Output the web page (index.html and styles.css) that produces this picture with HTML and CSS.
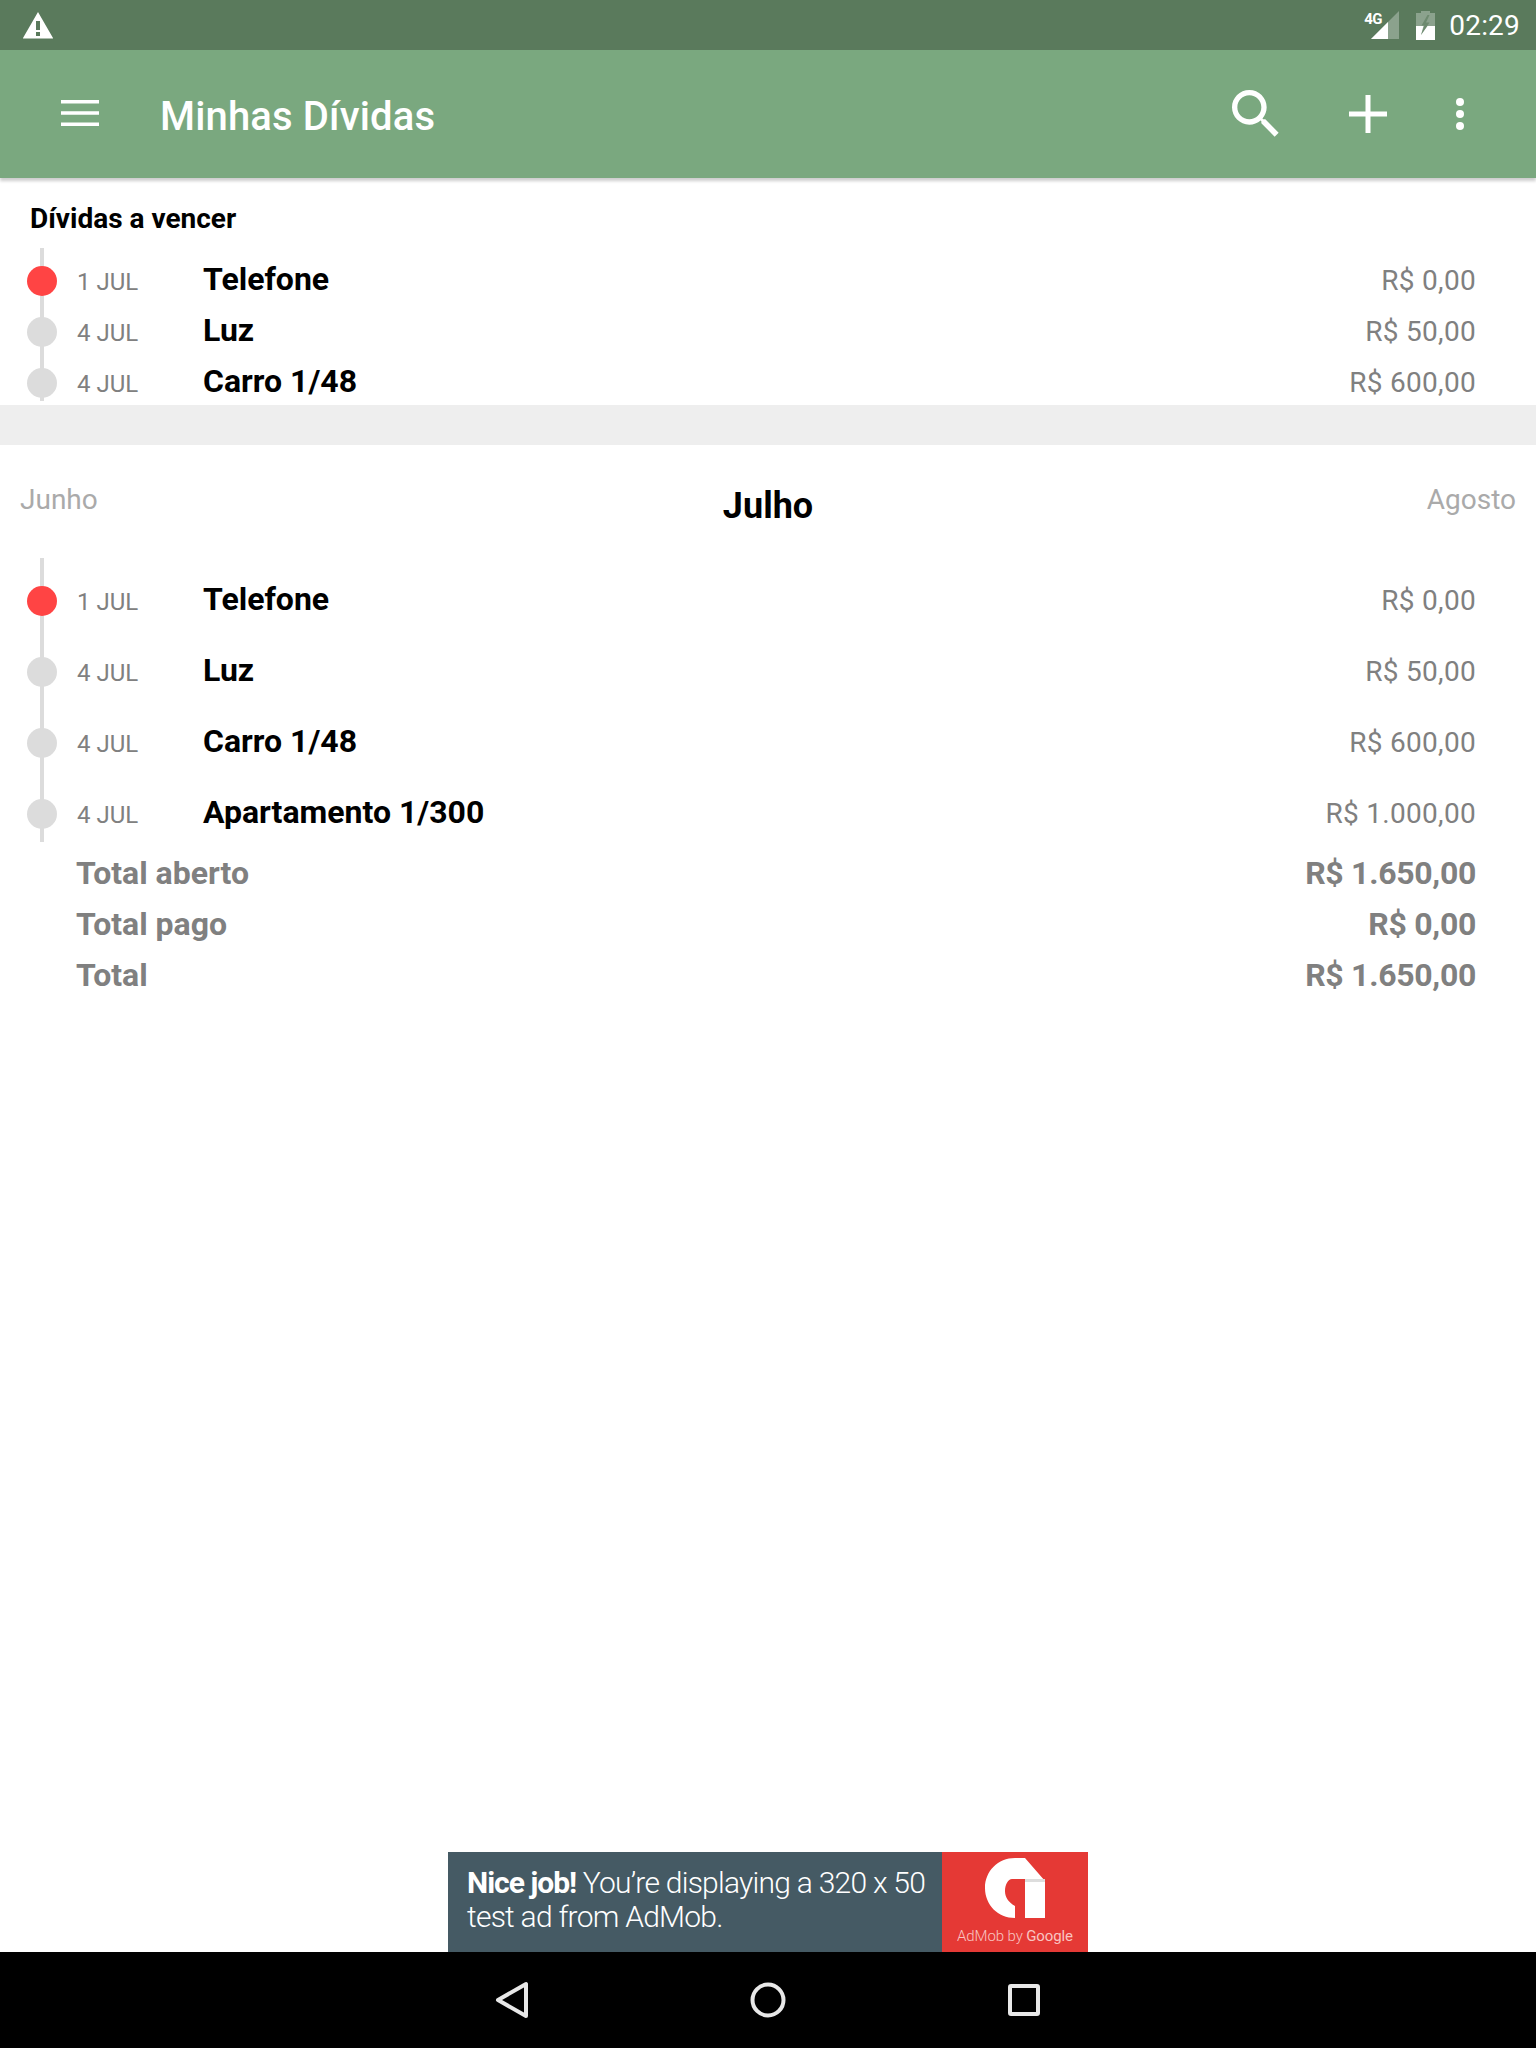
FILE: index.html
```html
<!DOCTYPE html>
<html lang="pt-BR">
<head>
  <meta charset="UTF-8" />
  <meta name="viewport" content="width=device-width, initial-scale=1.0" />
  <title>Minhas Dívidas</title>
  <link rel="stylesheet" href="styles.css">
</head>
<body>
  <div class="app">
    <!-- barra de status -->
    <div class="status-bar">
      <svg class="warn-icon" width="32" height="28" viewBox="0 0 32 28">
        <path fill="#fff" fill-rule="evenodd" d="M16 1 L31 27 a0.5 .5 0 0 1 -.5 .6 H1.5 a0.5 .5 0 0 1 -.5 -.6 Z M14 10 V19 H18 V10 Z M14 21 V25 H18 V21 Z"/>
      </svg>
      <div class="status-right">
        <div class="signal">
          <span class="net-label">4G</span>
          <svg width="28" height="28" viewBox="0 0 28 28">
            <path fill="#fff" fill-opacity=".3" d="M28 0 V28 H0 Z"/>
            <path fill="#fff" d="M17 11 V28 H0 Z"/>
          </svg>
        </div>
        <svg class="battery" width="19" height="29" viewBox="0 0 19 29">
          <path fill="#fff" fill-opacity=".3" d="M5 0 H14 V2 H19 V29 H0 V2 H5 Z"/>
          <path fill="#fff" d="M0 15 H7.500 L5 24 L11.500 15 H19 V29 H0 Z"/>
          <path fill="#5a7a5c" fill-opacity=".6" d="M11.500 4 L5.500 14.500 H8.500 L5 24 L13.500 11.500 H10 L13.500 4 Z"/>
        </svg>
        <span class="clock">02:29</span>
      </div>
    </div>

    <!-- toolbar -->
    <header class="toolbar">
      <svg class="menu-icon" width="38" height="26" viewBox="0 0 38 26">
        <path fill="#fff" d="M0 0 H38 V3.500 H0 Z M0 11.250 H38 V14.750 H0 Z M0 22.500 H38 V26 H0 Z"/>
      </svg>
      <h1 class="toolbar-title">Minhas Dívidas</h1>
      <svg class="search-icon" width="64" height="64" viewBox="0 0 24 24">
        <path fill="#fff" d="M15.500 14h-.79l-.28-.27C15.410 12.590 16 11.110 16 9.500 16 5.910 13.090 3 9.500 3S3 5.910 3 9.500 5.910 16 9.500 16c1.610 0 3.090-.59 4.230-1.570l.27.28v.79l5 4.990L20.490 19l-4.990-5zm-6 0C7.010 14 5 11.990 5 9.500S7.010 5 9.500 5 14 7.010 14 9.500 11.990 14 9.500 14z"/>
      </svg>
      <svg class="add-icon" width="38" height="38" viewBox="0 0 38 38">
        <path fill="#fff" d="M16.500 0 H21.500 V16.500 H38 V21.500 H21.500 V38 H16.500 V21.500 H0 V16.500 H16.500 Z"/>
      </svg>
      <svg class="more-icon" width="8" height="32" viewBox="0 0 8 32">
        <circle cx="4" cy="4" r="4" fill="#fff"/>
        <circle cx="4" cy="16" r="4" fill="#fff"/>
        <circle cx="4" cy="28" r="4" fill="#fff"/>
      </svg>
    </header>

    <main class="content">
      <!-- a vencer -->
      <section class="upcoming">
        <h2 class="section-title">Dívidas a vencer</h2>
        <ul class="timeline timeline-compact">
          <li class="debt-row">
            <span class="dot dot-late"></span>
            <span class="debt-date">1 JUL</span>
            <span class="debt-name">Telefone</span>
            <span class="debt-value">R$ 0,00</span>
          </li>
          <li class="debt-row">
            <span class="dot"></span>
            <span class="debt-date">4 JUL</span>
            <span class="debt-name">Luz</span>
            <span class="debt-value">R$ 50,00</span>
          </li>
          <li class="debt-row">
            <span class="dot"></span>
            <span class="debt-date">4 JUL</span>
            <span class="debt-name">Carro 1/48</span>
            <span class="debt-value">R$ 600,00</span>
          </li>
        </ul>
      </section>

      <div class="band"></div>

      <!-- mes -->
      <div class="month-nav">
        <span class="month-side">Junho</span>
        <span class="month-current">Julho</span>
        <span class="month-side month-next">Agosto</span>
      </div>

      <ul class="timeline timeline-month">
        <li class="debt-row">
          <span class="dot dot-late"></span>
          <span class="debt-date">1 JUL</span>
          <span class="debt-name">Telefone</span>
          <span class="debt-value">R$ 0,00</span>
        </li>
        <li class="debt-row">
          <span class="dot"></span>
          <span class="debt-date">4 JUL</span>
          <span class="debt-name">Luz</span>
          <span class="debt-value">R$ 50,00</span>
        </li>
        <li class="debt-row">
          <span class="dot"></span>
          <span class="debt-date">4 JUL</span>
          <span class="debt-name">Carro 1/48</span>
          <span class="debt-value">R$ 600,00</span>
        </li>
        <li class="debt-row">
          <span class="dot"></span>
          <span class="debt-date">4 JUL</span>
          <span class="debt-name">Apartamento 1/300</span>
          <span class="debt-value">R$ 1.000,00</span>
        </li>
      </ul>

      <div class="totals">
        <div class="total-row"><span>Total aberto</span><span class="total-value">R$ 1.650,00</span></div>
        <div class="total-row"><span>Total pago</span><span class="total-value">R$ 0,00</span></div>
        <div class="total-row"><span>Total</span><span class="total-value">R$ 1.650,00</span></div>
      </div>
    </main>

    <!-- anuncio -->
    <div class="ad-slot">
      <div class="ad">
        <p class="ad-text"><b>Nice job!</b> You’re displaying a 320 x 50<br>test ad from AdMob.</p>
        <div class="ad-brand">
          <svg width="60" height="60" viewBox="0 0 60 60">
            <path fill="#fff" d="M30 0 H40 L60 23 V60 H40 V21 H27 C23 21 20 27 20 33 C20 39 23 44 30 48 V60 C13 60 0 47 0 30 C0 13 13 0 30 0 Z"/>
            <path fill="#ddd" d="M40 21 H60 V24 H40 Z"/>
          </svg>
          <span class="ad-brand-text">AdMob by <b>Google</b></span>
        </div>
      </div>
    </div>

    <!-- navegacao -->
    <nav class="nav-bar">
      <span class="nav-btn">
        <svg width="36" height="38" viewBox="0 0 36 38">
          <path d="M32 3 V35 L4 19 Z" fill="none" stroke="#e8e8e8" stroke-width="4" stroke-linejoin="round"/>
        </svg>
      </span>
      <span class="nav-btn">
        <svg width="36" height="36" viewBox="0 0 36 36">
          <circle cx="18" cy="18" r="15.500" fill="none" stroke="#e8e8e8" stroke-width="4"/>
        </svg>
      </span>
      <span class="nav-btn">
        <svg width="32" height="32" viewBox="0 0 32 32">
          <rect x="2" y="2" width="28" height="28" rx="1" fill="none" stroke="#e8e8e8" stroke-width="4"/>
        </svg>
      </span>
    </nav>
  </div>
</body>
</html>
```

FILE: styles.css
```css
* {
  box-sizing: border-box;
}
body {
  margin: 0;
  font-family: Roboto, 'Noto Sans', sans-serif;
  background-color: #fff;
}
h1, h2, p, ul {
  margin: 0;
  padding: 0;
}
ul {
  list-style: none;
}
.app {
  display: flex;
  flex-direction: column;
  height: 2048px;
  overflow: hidden;
}

/* status */
.status-bar {
  display: flex;
  align-items: center;
  justify-content: space-between;
  height: 50px;
  padding: 0 16px 0 22px;
  background-color: #5a7a5c;
  color: #fff;
}
.warn-icon {
  margin-top: -1px;
}
.status-right {
  display: flex;
  align-items: center;
}
.signal {
  position: relative;
  width: 28px;
  height: 28px;
}
.net-label {
  position: absolute;
  left: -7px;
  top: -1px;
  font-size: 15px;
  font-weight: 700;
  letter-spacing: -0.6px;
}
.signal svg {
  display: block;
}
.battery {
  margin: 0 0 0 17px;
}
.clock {
  margin-left: 14px;
  font-size: 28px;
  letter-spacing: 0.2px;
}

/* toolbar */
.toolbar {
  position: relative;
  z-index: 1;
  display: flex;
  align-items: center;
  height: 128px;
  padding: 0 72px 0 61px;
  background-color: #7aa87f;
  box-shadow: 0 3px 3px rgba(0,0,0,0.2);
}
.menu-icon {
  margin-top: -2px;
}
.toolbar-title {
  flex: 1;
  margin: 5px 0 0 61px;
  font-size: 40px;
  font-weight: 500;
  letter-spacing: 0.15px;
  color: #fff;
}
.add-icon {
  margin-left: 61px;
}
.more-icon {
  margin-left: 69px;
}

/* listas */
.content {
  flex: 1;
}
.upcoming {
  height: 227px;
  overflow: hidden;
}
.section-title {
  padding: 22px 0 0 30px;
  font-size: 28px;
  font-weight: 700;
  line-height: 38px;
  color: #000;
}
.timeline {
  position: relative;
  padding-left: 27px;
}
.timeline::before {
  content: "";
  position: absolute;
  left: 40px;
  top: 0;
  bottom: 0;
  width: 4px;
  background-color: #dcdcdc;
}
.timeline-compact {
  height: 153px;
  margin-top: 10px;
  padding-top: 7px;
}
.timeline-compact .debt-row {
  height: 51px;
}
.timeline-month {
  height: 284px;
  padding-top: 7px;
}
.timeline-month .debt-row {
  height: 71px;
}
.debt-row {
  position: relative;
  display: flex;
  align-items: center;
  padding-right: 60px;
}
.dot {
  flex: none;
  width: 30px;
  height: 30px;
  border-radius: 50%;
  background-color: #dcdcdc;
}
.dot-late {
  background-color: #ff4444;
}
.debt-date {
  flex: none;
  width: 146px;
  margin-top: 2px;
  padding-left: 20px;
  font-size: 24px;
  color: #808080;
}
.debt-name {
  flex: 1;
  margin-top: -4px;
  font-size: 32px;
  font-weight: 700;
  color: #000;
}
.debt-value {
  font-size: 28px;
  letter-spacing: 0.3px;
  color: #808080;
}
.band {
  height: 40px;
  background-color: #eeeeee;
}
.month-nav {
  display: grid;
  grid-template-columns: 1fr auto 1fr;
  height: 113px;
  padding: 38px 20px 0;
}
.month-side {
  font-size: 28px;
  color: #aaa;
}
.month-next {
  text-align: right;
}
.month-current {
  margin-top: 2px;
  font-size: 36px;
  font-weight: 700;
  color: #000;
}
.totals {
  padding: 6px 60px 0 76px;
}
.total-row {
  display: flex;
  justify-content: space-between;
  height: 51px;
  font-size: 32px;
  font-weight: 700;
  line-height: 51px;
  color: #808080;
}
.total-value {
  letter-spacing: -0.3px;
}

/* anuncio */
.ad-slot {
  display: flex;
  justify-content: center;
}
.ad {
  display: flex;
  width: 640px;
  height: 100px;
  background-color: #455a64;
}
.ad-text {
  width: 494px;
  padding: 14px 0 0 19px;
  font-size: 30px;
  font-weight: 300;
  line-height: 34px;
  letter-spacing: -0.75px;
  color: #fff;
  white-space: nowrap;
}
.ad-text b {
  font-weight: 700;
  letter-spacing: -1px;
}
.ad-brand {
  display: flex;
  flex-direction: column;
  align-items: center;
  flex: 1;
  padding-top: 6px;
  background-color: #e53935;
}
.ad-brand-text {
  margin-top: 9px;
  font-size: 15px;
  font-weight: 300;
  color: #f9c4c1;
  letter-spacing: -0.1px;
  white-space: nowrap;
}
.ad-brand-text b {
  font-weight: 400;
}

/* navegacao */
.nav-bar {
  display: grid;
  grid-template-columns: repeat(3, 256px);
  justify-content: center;
  align-items: center;
  height: 96px;
  background-color: #000;
}
.nav-btn {
  display: flex;
  justify-content: center;
}
```
